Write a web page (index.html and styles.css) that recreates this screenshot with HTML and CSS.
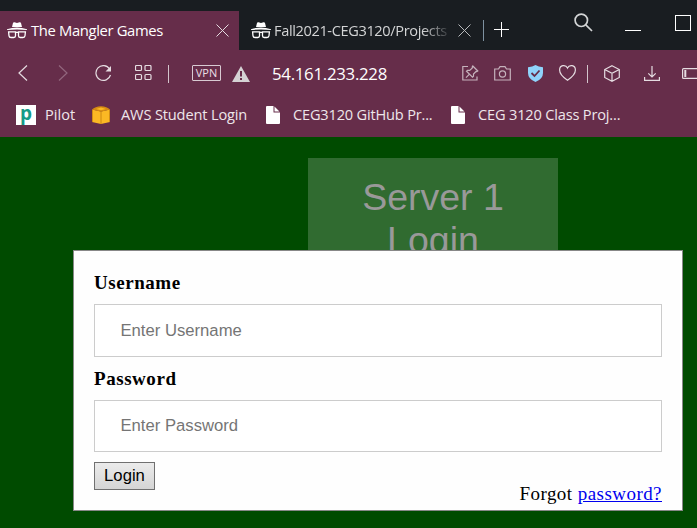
FILE: index.html
```html
<!DOCTYPE html>
<html lang="en">
<head>
<meta charset="utf-8">
<title>The Mangler Games</title>
<link rel="stylesheet" href="styles.css">
</head>
<body>
<svg class="defs" width="0" height="0">
  <symbol id="incognito" viewBox="0 0 20 17">
    <path fill="#fff" d="M5 5 6 1Q6.4 0 7.5.3L10 1l2.5-.7Q13.6 0 14 1l1 4zM0 7.2Q5 5.5 10 5.5t10 1.7V8Q15 7.5 10 7.5T0 8z"/>
    <path fill="none" stroke="#fff" stroke-width="1.3" d="M1.600 9.800h6.900v4q0 1.700-1.700 1.700H4q-1.800 0-2-1.700zM11.500 9.800h6.900l-.4 4q-.2 1.700-2 1.700h-2.800q-1.700 0-1.700-1.700zM8.500 10.300h3"/>
  </symbol>
  <symbol id="cross" viewBox="0 0 13 13"><path d="M.5.5l12 12M12.500.5l-12 12"/></symbol>
  <symbol id="file" viewBox="0 0 14 18"><path fill="#fff" d="M1 0h6.500v6.500H14V17q0 1-1 1H1q-1 0-1-1V1q0-1 1-1zM8.500.5 13.500 5.500h-5z"/></symbol>
</svg>
<header class="browser">
  <div class="tabs">
    <div class="tab active">
      <svg class="spy"><use href="#incognito"/></svg>
      <span class="tab-title first">The Mangler Games</span>
      <svg class="close"><use href="#cross"/></svg>
    </div>
    <div class="tab">
      <svg class="spy"><use href="#incognito"/></svg>
      <span class="tab-title second">Fall2021-CEG3120/Projects</span>
      <svg class="close dim"><use href="#cross"/></svg>
    </div>
    <i class="tab-divider"></i>
    <svg class="plus" viewBox="0 0 15 15"><path d="M7.500 0v15M0 7.500h15"/></svg>
    <svg class="search" viewBox="0 0 19 19"><circle cx="7.300" cy="7.300" r="6.200"/><path d="M11.800 11.800 18 18"/></svg>
    <i class="minimize"></i>
    <i class="maximize"></i>
  </div>
  <nav class="toolbar">
    <svg class="back" viewBox="0 0 10 16"><path d="M9 .5 1 8l8 7.500"/></svg>
    <svg class="forward" viewBox="0 0 10 16"><path d="M1 .5 9 8l-8 7.500"/></svg>
    <svg class="reload" viewBox="0 0 17 17"><path d="M14.600 4A7.400 7.400 0 1 0 15.500 10"/><path class="solid" d="M16 1v5.500h-5.500z"/></svg>
    <svg class="grid" viewBox="0 0 17 16"><rect x=".5" y=".5" width="6" height="5" rx="1"/><rect x="10" y=".5" width="6" height="5" rx="1"/><rect x=".5" y="9.500" width="6" height="5" rx="1"/><rect x="10" y="9.500" width="6" height="5" rx="1"/></svg>
    <i class="bar-divider left"></i>
    <span class="vpn">VPN</span>
    <svg class="warning" viewBox="0 0 18 16"><path class="triangle" d="M9 0 18 16H0z"/><path class="mark" d="M9 5v5.500M9 12v2"/></svg>
    <span class="address">54.161.233.228</span>
    <svg class="pin" viewBox="0 0 17 17"><path d="M6 1.500H.8V15H15v-3.500"/><path d="m10.800 1 5 5-1 .7-.8-.2-2.500 2.500v2.200l-1 1-6-6 1-.8h2.200L10.300 3V1.600zM7.500 9.200 4 12.700"/></svg>
    <svg class="camera" viewBox="0 0 17 15"><path d="M.7 3h3.800l1.500-2.300h5L12.500 3h3.800v11H.7z"/><circle cx="8.500" cy="8" r="3.100"/></svg>
    <svg class="shield" viewBox="0 0 15 17"><path class="body" d="M7.500 0Q10.500 2 15 2.200V8q0 6-7.500 9Q0 14 0 8V2.200Q4.500 2 7.500 0z"/><path class="check" d="m3.500 8 3 3 5-5.500"/></svg>
    <svg class="heart" viewBox="0 0 17 16"><path d="M8.500 3C6.800-.6.6-.2.6 5c0 4 3.800 7.500 7.900 10.200C12.600 12.500 16.400 9 16.400 5c0-5.200-6.200-5.600-7.900-2z"/></svg>
    <i class="bar-divider right"></i>
    <svg class="cube" viewBox="0 0 16 17"><path d="m8 .7 7.300 3.800v8L8 16.300.7 12.500v-8zM.7 4.500 8 8.300l7.300-3.800M8 8.300v8"/></svg>
    <svg class="download" viewBox="0 0 16 15"><path d="M8 0v11M4.300 7.300 8 11l3.700-3.700M.6 11v3.400h14.800V11"/></svg>
    <svg class="battery" viewBox="0 0 15 11"><path d="M17 .6H1.500q-.9 0-.9.900v8q0 .9.900.9H17"/><path class="level" d="M3.300 2v7"/></svg>
  </nav>
  <nav class="bookmarks">
    <span class="pilot-icon">p</span><span class="bookmark pilot">Pilot</span>
    <svg class="aws" viewBox="0 0 18 18"><path fill="#fbb824" d="M0 3.500 9 5.500V18l-9-2zM18 3.500 9 5.500V18l9-2z"/><path fill="#d58a12" d="M0 3.500Q3 .5 9 .2q6 .3 9 3.300l-9 2.300z"/><path fill="#fbb824" d="m4 3 5-1.500L14 3 9 4.300z"/><path fill="none" stroke="#c27c10" d="M9 5.500V18M.4 4v12M17.600 4v12" stroke-width=".8"/></svg><span class="bookmark student">AWS Student Login</span>
    <svg class="file one"><use href="#file"/></svg><span class="bookmark github">CEG3120 GitHub Pr...</span>
    <svg class="file two"><use href="#file"/></svg><span class="bookmark class-project">CEG 3120 Class Proj...</span>
  </nav>
</header>
<main class="page">
  <h1 class="server">Server 1<br>Login</h1>
  <form class="login-card">
    <label for="user">Username</label>
    <input id="user" class="username" type="text" placeholder="Enter Username">
    <label for="pass">Password</label>
    <input id="pass" class="password" type="password" placeholder="Enter Password">
    <button type="button">Login</button>
    <p class="forgot">Forgot <a href="#">password?</a></p>
  </form>
</main>
</body>
</html>
```
FILE: styles.css
```css
* { box-sizing: border-box; }
body { margin: 0; width: 697px; height: 528px; overflow: hidden; background: #004b00; }
.defs { position: absolute; }
svg { display: block; flex: none; fill: none; stroke: #e5dce1; stroke-width: 1.2; }
span, i { display: block; flex: none; white-space: nowrap; }
.browser { height: 137px; background: #662d4a; color: #fff; font-family: "Open Sans", "Noto Sans", sans-serif; }

.tabs { display: flex; height: 50px; background: #191d21; overflow: hidden; }
.tab { display: flex; flex: none; align-items: center; width: 239px; height: 39px; margin-top: 11px; padding-left: 7px; }
.tab.active { background: #662d4a; }
.tab:not(.active) { width: 244px; padding-left: 12px; }
.spy { width: 20px; height: 17px; stroke: none; }
.tab-title { margin-left: 4px; padding-bottom: 2px; font-size: 14.8px; line-height: 22px; }
.first { width: 185px; letter-spacing: -0.36px; }
.second { width: 175px; margin-left: 3px; overflow: hidden; color: #d3d4d5; font-size: 14.6px; letter-spacing: -0.38px; -webkit-mask-image: linear-gradient(90deg, #000 85%, transparent 102%); mask-image: linear-gradient(90deg, #000 85%, transparent 102%); }
.close { width: 13px; height: 13px; stroke-width: 1; }
.dim { margin-left: 9px; stroke: #b8babc; }
.tab-divider { width: 1px; height: 21px; margin-top: 20px; background: #7e91a0; }
.plus { width: 15px; height: 15px; margin: 22px 0 0 10px; stroke: #fff; stroke-width: 1; }
.search { width: 19px; height: 19px; margin: 13px 0 0 65px; stroke: #d3d5d6; stroke-width: 1.7; }
.minimize { width: 16px; height: 1px; margin: 30px 0 0 32px; background: #fff; }
.maximize { width: 16px; height: 16px; margin: 15px 0 0 34px; border: 1px solid #fff; }

.toolbar { display: flex; align-items: center; height: 46px; overflow: hidden; }
.back, .forward { width: 10px; height: 16px; }
.back { margin-left: 18px; }
.forward { margin-left: 30px; stroke: #92677e; }
.reload { width: 17px; height: 17px; margin-left: 27px; }
.reload .solid { fill: #e5dce1; stroke: none; }
.grid { width: 17px; height: 16px; margin-left: 23px; }
.bar-divider { width: 1px; height: 18px; margin-top: 1px; background: #d3c4cc; }
.left { margin-left: 16px; }
.right { margin-left: 11px; }
.vpn { width: 29px; height: 16px; margin-left: 23px; border: 1px solid #d8cad2; border-radius: 1px; color: #eadfe5; font-size: 11px; line-height: 14px; text-align: center; }
.warning { width: 18px; height: 16px; margin: 2px 0 0 11px; stroke: none; }
.warning .triangle { fill: #d5d2d4; }
.warning .mark { stroke: #662d4a; stroke-width: 2; }
.address { width: 190px; margin: 1px 0 0 22px; font-size: 16.8px; letter-spacing: -0.27px; }
.pin { width: 17px; height: 17px; }
.camera { width: 17px; height: 15px; margin-left: 15px; }
.pin, .camera { stroke: #c5b2bc; }
.shield { width: 15px; height: 17px; margin-left: 17px; stroke: none; }
.shield .body { fill: #8fd3fb; }
.shield .check { stroke: #662d4a; stroke-width: 1.8; }
.heart { width: 17px; height: 16px; margin-left: 16px; }
.cube { width: 16px; height: 17px; margin-left: 16px; }
.download { width: 16px; height: 15px; margin-left: 24px; }
.battery { width: 15px; height: 11px; margin-left: 22px; }
.battery .level { stroke-width: 2; }

.bookmarks { display: flex; align-items: center; height: 38px; padding-left: 16px; overflow: hidden; }
.pilot-icon { width: 20px; height: 20px; background: #fff; color: #169b88; font-size: 19px; font-weight: 700; line-height: 16px; text-align: center; }
.bookmark { padding-bottom: 2px; color: #eee6ea; font-size: 14.6px; line-height: 22px; }
.pilot { width: 46px; margin-left: 9px; }
.aws { width: 18px; height: 18px; margin-left: 1px; stroke: none; }
.student { width: 145px; margin-left: 11px; letter-spacing: -0.15px; }
.file { width: 14px; height: 18px; stroke: none; }
.github { width: 158px; margin-left: 13px; letter-spacing: -0.19px; }
.class-project { margin-left: 13px; letter-spacing: -0.18px; }

.page { display: grid; grid-template-rows: 113px 261px; padding-left: 73px; height: 391px; }
.server { width: 250px; height: 92px; margin: 21px 0 0 235px; padding-top: 18px; overflow: hidden; background: #306b30; color: #999; font: 37.5px/43px "Liberation Sans", Arial, sans-serif; text-align: center; }
.login-card { display: grid; grid-template-rows: 24px 9px 53px 10px 23px 10px 52px 10px 28px; width: 610px; height: 261px; padding: 20px 20px 0; border: 1px solid #888; background: #fefefe; color: #000; font: 19px/24px "Liberation Serif", "Times New Roman", serif; }
.login-card label { font-weight: 700; letter-spacing: 0.55px; }
.login-card input { grid-row: 3; width: 568px; padding: 0 25px; border: 1px solid #ccc; border-radius: 0; background: #fff; font: 16.67px "Liberation Sans", Arial, sans-serif; }
.login-card label[for="pass"] { grid-row: 5; }
.login-card .password { grid-row: 7; }
.login-card input::placeholder { color: #757575; }
.login-card button { grid-row: 9; width: 61px; padding: 0; border: 1px solid #707070; border-radius: 0; background: linear-gradient(#ebebeb, #d5d5d5); color: #000; font: 16.67px "Liberation Sans", Arial, sans-serif; }
.login-card input { padding-left: 25.5px; }
.forgot { grid-row: 10; margin: -8px 0 0; text-align: right; letter-spacing: 0.45px; }
.forgot a { color: #00e; }
```
